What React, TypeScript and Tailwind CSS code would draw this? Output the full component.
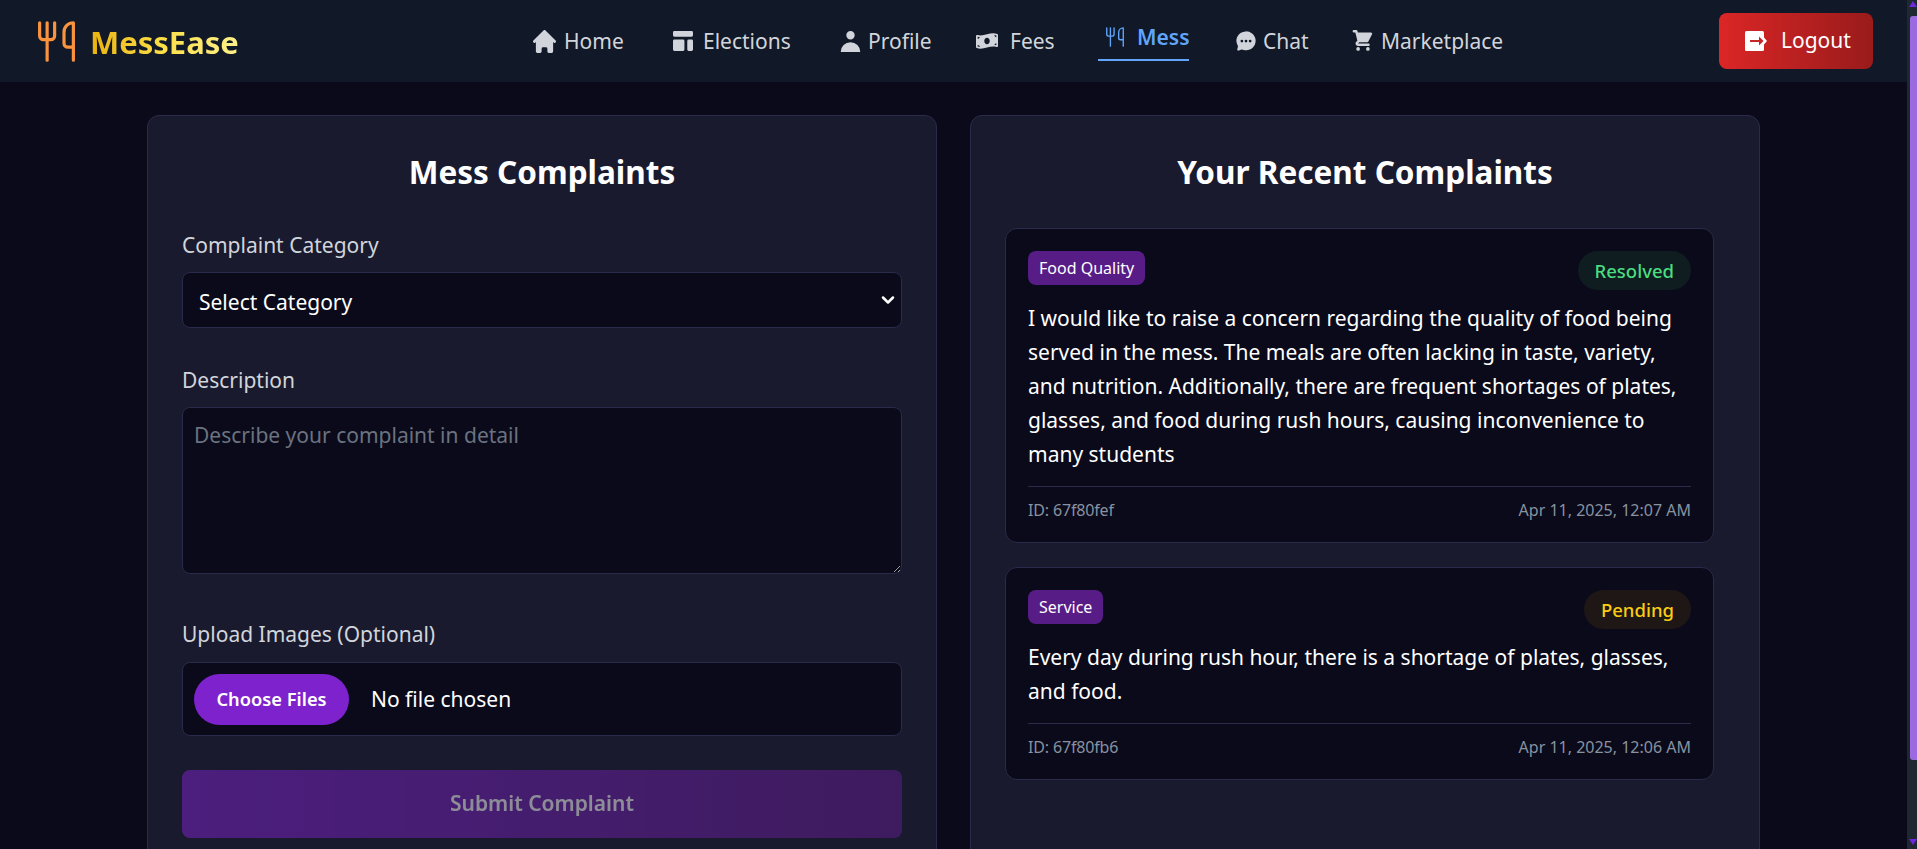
import { HiTemplate, HiHome, HiUser, HiShoppingCart } from "react-icons/hi";
import { IoChatbubbleEllipses } from "react-icons/io5";
import { FaMoneyBillWave } from "react-icons/fa";
import { Utensils, ChevronDown } from "lucide-react";

const font = { fontFamily: '"Noto Sans", sans-serif' };

function NavItem({ icon, label, w, gap }: { icon: React.ReactNode; label: string; w: string; gap: string }) {
  return (
    <a className={`flex items-center text-[21px] leading-[28px] text-[#d1d5db] ${w} ${gap}`}>
      {icon}
      <span>{label}</span>
    </a>
  );
}

function LogoutIcon() {
  return (
    <svg width="22" height="20" viewBox="0 0 22 20" className="shrink-0">
      <rect width="19" height="20" rx="1.5" fill="#ffffff" />
      <rect x="5" y="9" width="10" height="2" fill="#c62828" />
      <path d="M14 5.5L18.5 10L14 14.5Z" fill="#c62828" />
      <path d="M19 6.5L22 10L19 13.5Z" fill="#ffffff" />
    </svg>
  );
}

function Complaint({
  tag, status, statusCls, lines, id, date,
}: { tag: string; status: string; statusCls: string; lines: string[]; id: string; date: string }) {
  return (
    <div className="rounded-xl border border-[#2a2a4a] bg-[#0a0a1a] px-[22px] pt-[22px] pb-[20px]">
      <div className="flex items-start justify-between">
        <span className="flex h-[34px] items-center rounded-lg bg-[#581c87] px-[11px] text-base text-white">{tag}</span>
        <span className={`flex h-[39px] items-center rounded-full px-[17px] text-[18.5px] font-medium ${statusCls}`}>{status}</span>
      </div>
      <div className="mt-[11px] text-[21px] leading-[34px] text-white">
        {lines.map((l) => <div key={l} className="whitespace-nowrap">{l}</div>)}
      </div>
      <div className="mt-[15px] flex justify-between border-t border-[#2a2a4a] pt-[11px] text-base leading-[24px] text-[#8892a0]">
        <span className="tracking-[-0.01em]">{id}</span>
        <span>{date}</span>
      </div>
    </div>
  );
}

export default function App() {
  return (
    <div className="flex h-[849px] overflow-hidden bg-[#0a0a1a]" style={font}>
      <div className="min-w-0 flex-1">
        <header className="flex h-[82px] items-center bg-[#111827] pl-[34px] pr-[34px]">
          <div className="flex w-[499px] items-center gap-[11px]">
            <Utensils size={45} strokeWidth={1.7} className="text-[#fb923c]" />
            <span className="mt-[2px] bg-gradient-to-r from-[#eab308] via-[#fde047] to-[#fef08a] bg-clip-text text-[31px] font-bold text-transparent">MessEase</span>
          </div>
          <nav className="flex flex-1 items-center">
            <NavItem w="w-[140px]" gap="gap-[8px]" icon={<HiHome viewBox="2 2 16 16" size={23} />} label="Home" />
            <NavItem w="w-[167px]" gap="gap-[10px]" icon={<HiTemplate viewBox="3 3 14 14" size={20} />} label="Elections" />
            <NavItem w="w-[136px]" gap="gap-[7px]" icon={<HiUser viewBox="3 3 14 15" size={21} />} label="Profile" />
            <NavItem w="w-[122px]" gap="gap-[12px]" icon={<FaMoneyBillWave size={22} />} label="Fees" />
            <a className="mr-[46px] mt-[-4px] flex h-[44px] w-[91px] flex-col items-start border-b-[2px] border-[#60a5fa] pt-[6px] text-[21px] font-semibold leading-[28px] text-[#60a5fa]">
              <span className="flex items-center gap-[11px] whitespace-nowrap">
                <Utensils size={22} strokeWidth={1.5} className="ml-[6px]" />
                <span>Mess</span>
              </span>
            </a>
            <NavItem w="w-[117px]" gap="gap-[6px]" icon={<IoChatbubbleEllipses size={22} />} label="Chat" />
            <NavItem w="w-[170px]" gap="gap-[7px]" icon={<HiShoppingCart viewBox="2 1 17 18" size={22} />} label="Marketplace" />
          </nav>
          <button className="flex h-[56px] w-[154px] items-center gap-[14px] rounded-lg bg-gradient-to-r from-[#dc2626] to-[#991b1b] pl-[26px] text-[21px] font-normal text-white">
            <LogoutIcon />
            Logout
          </button>
        </header>

        <main className="grid grid-cols-2 gap-[33px] pl-[147px] pr-[147px] pt-[33px]">
          <section className="h-[900px] rounded-xl border border-[#2a2a4a] bg-[#1a1a2e] px-[34px] pt-[34px]">
            <h2 className="mb-[37px] text-center text-[31.5px] font-bold leading-[44px] text-white">Mess Complaints</h2>
            <label className="block text-[21px] leading-[28px] text-[#d1d5db]">Complaint Category</label>
            <div className="relative mt-[13px]">
              <select className="h-[56px] w-full appearance-none rounded-lg border border-[#2a2a4a] bg-[#0a0a1a] pl-4 pt-[6px] text-[21px] text-white">
                <option>Select Category</option>
              </select>
              <ChevronDown size={20} strokeWidth={3} className="pointer-events-none absolute right-[4px] top-[18px] text-white" />
            </div>
            <label className="mt-[38px] block text-[21px] leading-[28px] text-[#d1d5db]">Description</label>
            <textarea
              placeholder="Describe your complaint in detail"
              className="mt-[13px] block h-[167px] w-full rounded-lg border border-[#2a2a4a] bg-[#0a0a1a] pl-[11px] pr-3 pt-[13px] pb-2 text-[21px] leading-[28px] text-white placeholder:text-[#6b7280]"
            />
            <label className="mt-[46px] block text-[21px] leading-[28px] text-[#d1d5db]">Upload Images (Optional)</label>
            <div className="mt-[14px] flex h-[74px] items-center rounded-lg border border-[#2a2a4a] bg-[#0a0a1a] pl-[11px]">
              <input
                type="file"
                multiple
                className="w-full text-[21px] text-white file:mr-[22px] file:h-[51px] file:w-[155px] file:rounded-full file:border-0 file:bg-[#7e22ce] file:text-[18.3px] file:font-semibold file:text-white"
              />
            </div>
            <button className="mt-[34px] h-[68px] w-full rounded-lg bg-gradient-to-r from-[#7e22ce] to-[#621d90] text-[21px] font-semibold text-white opacity-50">
              Submit Complaint
            </button>
          </section>

          <section className="h-[900px] rounded-xl border border-[#2a2a4a] bg-[#1a1a2e] pl-[34px] pr-[45px] pt-[34px]">
            <h2 className="mb-[34px] pl-[11px] text-center text-[31.5px] font-bold leading-[44px] text-white">Your Recent Complaints</h2>
            <div className="flex flex-col gap-[24px]">
              <Complaint
                tag="Food Quality"
                status="Resolved"
                statusCls="bg-[#0f1c20] text-[#4ade80]"
                lines={[
                  "I would like to raise a concern regarding the quality of food being",
                  "served in the mess. The meals are often lacking in taste, variety,",
                  "and nutrition. Additionally, there are frequent shortages of plates,",
                  "glasses, and food during rush hours, causing inconvenience to",
                  "many students",
                ]}
                id="ID: 67f80fef"
                date="Apr 11, 2025, 12:07 AM"
              />
              <Complaint
                tag="Service"
                status="Pending"
                statusCls="bg-[#1f1715] text-[#facc15]"
                lines={[
                  "Every day during rush hour, there is a shortage of plates, glasses,",
                  "and food.",
                ]}
                id="ID: 67f80fb6"
                date="Apr 11, 2025, 12:06 AM"
              />
            </div>
          </section>
        </main>
      </div>

      <aside className="flex w-[10px] flex-col items-end bg-[#1f2730]">
        <svg width="8" height="6" viewBox="0 0 8 6" className="mt-[1px]"><path d="M4 0L8 6H0Z" fill="#6d28d9" /></svg>
        <div className="mt-[9px] h-[744px] w-[7px] rounded-l-[3px] bg-[#9b6ae0]" />
        <svg width="8" height="6" viewBox="0 0 8 6" className="mt-[79px]"><path d="M0 0H8L4 6Z" fill="#6d28d9" /></svg>
      </aside>
    </div>
  );
}
